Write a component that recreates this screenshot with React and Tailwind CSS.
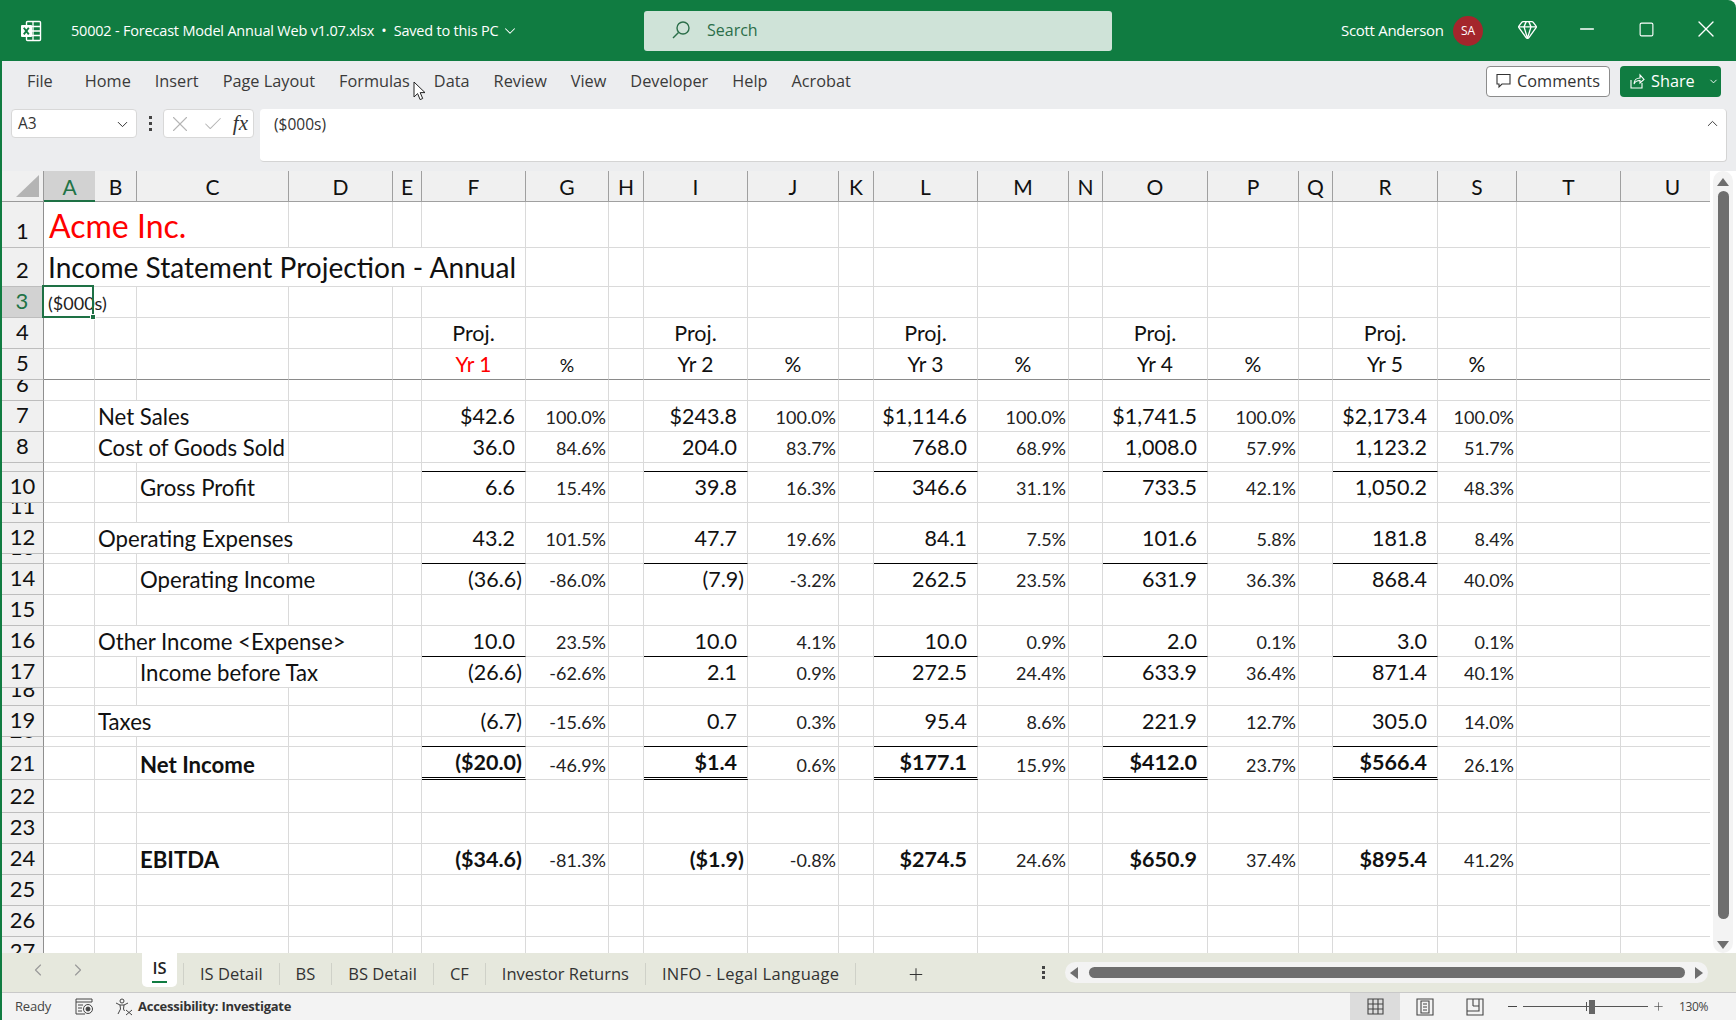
import React from "react";
import { ChevronDown, ChevronUp, ChevronLeft, ChevronRight, Gem, Minus, Plus, Square, X, Check } from "lucide-react";

const COLS = ["A","B","C","D","E","F","G","H","I","J","K","L","M","N","O","P","Q","R","S","T","U"];
const ROW_COUNT = 27;
const VAL_COLS = [5, 8, 11, 14, 17];

const VALUES = {
  7: [["$42.6","100.0%"],["$243.8","100.0%"],["$1,114.6","100.0%"],["$1,741.5","100.0%"],["$2,173.4","100.0%"]],
  8: [["36.0","84.6%"],["204.0","83.7%"],["768.0","68.9%"],["1,008.0","57.9%"],["1,123.2","51.7%"]],
  10: [["6.6","15.4%"],["39.8","16.3%"],["346.6","31.1%"],["733.5","42.1%"],["1,050.2","48.3%"]],
  12: [["43.2","101.5%"],["47.7","19.6%"],["84.1","7.5%"],["101.6","5.8%"],["181.8","8.4%"]],
  14: [["(36.6)","-86.0%"],["(7.9)","-3.2%"],["262.5","23.5%"],["631.9","36.3%"],["868.4","40.0%"]],
  16: [["10.0","23.5%"],["10.0","4.1%"],["10.0","0.9%"],["2.0","0.1%"],["3.0","0.1%"]],
  17: [["(26.6)","-62.6%"],["2.1","0.9%"],["272.5","24.4%"],["633.9","36.4%"],["871.4","40.1%"]],
  19: [["(6.7)","-15.6%"],["0.7","0.3%"],["95.4","8.6%"],["221.9","12.7%"],["305.0","14.0%"]],
  21: [["($20.0)","-46.9%"],["$1.4","0.6%"],["$177.1","15.9%"],["$412.0","23.7%"],["$566.4","26.1%"]],
  24: [["($34.6)","-81.3%"],["($1.9)","-0.8%"],["$274.5","24.6%"],["$650.9","37.4%"],["$895.4","41.2%"]],
};

const LABELS = {
  7: [1, 2, "Net Sales"],
  8: [1, 2, "Cost of Goods Sold"],
  10: [2, 1, "Gross Profit"],
  12: [1, 3, "Operating Expenses"],
  14: [2, 2, "Operating Income"],
  16: [1, 3, "Other Income <Expense>"],
  17: [2, 2, "Income before Tax"],
  19: [1, 2, "Taxes"],
  21: [2, 1, "Net Income"],
  24: [2, 1, "EBITDA"],
};

const BLACK_BOTTOM = [9, 13, 16, 20];
const BASE = "border-r border-b border-[#dadada] flex items-end whitespace-nowrap min-w-0";
const NUM = "justify-end text-[21.5px] leading-none pb-[4px] text-[#111]";
const PCT = "justify-end text-[18px] leading-none pb-[5px] pr-[2px] text-[#222]";

function bottomBorder(row, col) {
  if (VAL_COLS.includes(col)) {
    if (BLACK_BOTTOM.includes(row)) return "border-b-[#000]";
    if (row === 21) return "border-b-[3px] border-double border-b-[#000]";
  }
  if (row === 5) return "border-b-[#8a8a8a]";
  return "";
}

function Sheet() {
  const cells = [];
  cells.push(
    <div key="corner" className="bg-[#f0f0f0] border-b border-r border-[#9a9a9a] flex items-end justify-end pr-[4px] pb-[4px]">
      <div className="w-0 h-0 border-l-[23px] border-l-transparent border-b-[22px] border-b-[#b4b4b4]" />
    </div>
  );
  COLS.forEach((c, i) => {
    cells.push(
      <div
        key={c}
        className={
          i === 0
            ? "bg-[#d2d2d2] border-b-2 border-[#1e7145] text-[#217346] flex items-center justify-center text-[21px] pt-[2px]"
            : "bg-[#f0f0f0] border-b border-r border-[#a0a0a0] text-[#111] flex items-center justify-center text-[21px] pt-[2px]"
        }
      >
        {c}
      </div>
    );
  });

  for (let r = 1; r <= ROW_COUNT; r++) {
    cells.push(
      <div
        key={"h" + r}
        className={
          r === 3
            ? "bg-[#d2d2d2] border-r-2 border-b border-r-[#1e7145] border-b-[#bdbdbd] text-[#217346] overflow-hidden flex items-end justify-center text-[22px] leading-none pb-[5px]"
            : "bg-[#f0f0f0] border-r border-b border-r-[#8f8f8f] border-b-[#bdbdbd] text-[#111] overflow-hidden flex items-end justify-center text-[22px] leading-none pb-[5px]"
        }
      >
        {r}
      </div>
    );
    let c = 0;
    while (c < COLS.length) {
      const key = r + "-" + c;
      if (r === 1 && c === 0) {
        cells.push(<div key={key} className={`${BASE} col-span-3 text-[#ff0000] text-[32px] leading-none pb-[5px] pl-[5px]`}>Acme Inc.</div>);
        c += 3;
      } else if (r === 2 && c === 0) {
        cells.push(<div key={key} className={`${BASE} col-span-6 text-[#111] text-[28.1px] leading-none pb-[5px] pl-[4px]`}>Income Statement Projection - Annual</div>);
        c += 6;
      } else if (r === 3 && c === 0) {
        cells.push(
          <div key={key} className={`${BASE} col-span-2 relative text-[#222] text-[18px] leading-none pb-[5px] pl-[4px]`}>
            ($000s)
            <div className="absolute left-[-2px] top-[-2px] w-[52px] h-[33px] border-2 border-[#1e7145]">
              <div className="absolute right-[-4px] bottom-[-4px] w-[6px] h-[6px] bg-[#1e7145] border border-white" />
            </div>
          </div>
        );
        c += 2;
      } else if (LABELS[r] && LABELS[r][0] === c) {
        const [, span, text] = LABELS[r];
        const spanCls = span === 3 ? "col-span-3" : span === 2 ? "col-span-2" : "col-span-1";
        const bold = r === 21 || r === 24;
        cells.push(
          <div key={key} className={`${BASE} ${spanCls} text-[22.2px] leading-none pb-[3px] pl-[3px] text-[#111] ${bold ? "font-bold" : ""}`}>
            {text}
          </div>
        );
        c += span;
      } else if (r === 4 && VAL_COLS.includes(c)) {
        cells.push(<div key={key} className={`${BASE} justify-center text-[21.5px] leading-none pb-[4px] text-[#111]`}>Proj.</div>);
        c++;
      } else if (r === 5 && VAL_COLS.includes(c)) {
        const yr = VAL_COLS.indexOf(c) + 1;
        cells.push(
          <div key={key} className={`${BASE} justify-center text-[21px] leading-none pb-[5px] border-b-[#8a8a8a] ${yr === 1 ? "text-[#ff0000]" : "text-[#111]"}`}>
            {"Yr " + yr}
          </div>
        );
        c++;
      } else if (r === 5 && VAL_COLS.includes(c - 1)) {
        cells.push(
          <div key={key} className={`${BASE} justify-center leading-none pb-[5px] border-b-[#8a8a8a] text-[#111] ${c === 6 ? "text-[18px]" : "text-[21px]"}`}>
            %
          </div>
        );
        c++;
      } else if (VALUES[r] && VAL_COLS.includes(c)) {
        const v = VALUES[r][VAL_COLS.indexOf(c)][0];
        const paren = v.endsWith(")");
        const bold = r === 21 || r === 24;
        cells.push(
          <div key={key} className={`${BASE} ${NUM} ${paren ? "pr-[3px]" : "pr-[10px]"} ${bold ? "font-bold" : ""} ${bottomBorder(r, c)}`}>
            {v}
          </div>
        );
        c++;
      } else if (VALUES[r] && VAL_COLS.includes(c - 1)) {
        cells.push(<div key={key} className={`${BASE} ${PCT}`}>{VALUES[r][VAL_COLS.indexOf(c - 1)][1]}</div>);
        c++;
      } else {
        cells.push(<div key={key} className={`${BASE} ${bottomBorder(r, c)}`} />);
        c++;
      }
    }
  }

  return (
    <div className="flex-1 min-w-0 overflow-hidden font-['Lato',sans-serif]">
      <div className="grid grid-cols-[42px_51px_42px_152px_104px_29px_104px_83px_35px_104px_91px_35px_104px_91px_34px_105px_91px_34px_105px_79px_104px_104px] grid-rows-[31px_46px_39px_31px_31px_31px_21px_31px_31px_9px_31px_20px_31px_10px_31px_31px_31px_31px_18px_31px_10px_33px_33px_31px_31px_31px_31px_31px]">
        {cells}
      </div>
    </div>
  );
}

function ExcelLogo() {
  return (
    <svg width="22" height="24" viewBox="0 0 22 24" fill="none">
      <rect x="6.5" y="2.5" width="14" height="19" rx="1" stroke="white" strokeWidth="1.4" />
      <path d="M13 2.5v19M7 7.5h13M7 12h13M7 16.5h13" stroke="white" strokeWidth="1.3" />
      <rect x="1" y="6" width="11" height="12" rx="1" fill="white" />
      <path d="M3.8 8.8l5 6.6M8.8 8.8l-5 6.6" stroke="#107c41" strokeWidth="1.9" />
    </svg>
  );
}

function Cursor() {
  return (
    <svg width="14" height="20" viewBox="0 0 14 20" className="absolute left-[413px] top-[81px]">
      <path d="M1 1v15l3.6-3.4 2.5 6 2.6-1.1-2.5-5.9H12z" fill="white" stroke="#222" strokeWidth="1" />
    </svg>
  );
}

const MENU = ["Home","Insert","Page Layout","Formulas","Data","Review","View","Developer","Help","Acrobat"];
const TABS = ["IS Detail","BS","BS Detail","CF","Investor Returns","INFO - Legal Language"];

export default function App() {
  return (
    <div className="relative w-[1736px] h-[1020px] overflow-hidden flex flex-col bg-white font-['Open_Sans',sans-serif]">
      {/* title bar */}
      <div className="h-[61px] shrink-0 bg-[#107c41] rounded-tr-[8px] flex items-center text-white">
        <div className="w-[71px] pl-[20px] flex items-center"><ExcelLogo /></div>
        <div className="w-[573px] flex items-center gap-[3px] text-[14.5px] tracking-[-0.2px] whitespace-nowrap pt-px">
          50002 - Forecast Model Annual Web v1.07.xlsx&nbsp;&nbsp;•&nbsp;&nbsp;Saved to this PC
          <ChevronDown size={18} strokeWidth={1.4} />
        </div>
        <div className="w-[468px] h-[40px] bg-[#cfe3d8] rounded-[3px] flex items-center pl-[27px] gap-[16px] text-[#2b6e49] text-[16px] pb-[2px]">
          <svg width="20" height="20" viewBox="0 0 20 20" fill="none" stroke="#2b6e49" strokeWidth="1.4">
            <circle cx="12" cy="8" r="6" />
            <path d="M7.5 12.5L2 18" />
          </svg>
          Search
        </div>
        <div className="ml-[229px] w-[112px] text-[15px] tracking-[-0.3px] whitespace-nowrap">Scott Anderson</div>
        <div className="w-[30px] h-[30px] rounded-full bg-[#a4262c] flex items-center justify-center text-[12px]">SA</div>
        <Gem size={21} strokeWidth={1.5} className="ml-[34px] mb-[3px]" />
        <Minus size={22} strokeWidth={1.4} className="ml-[38px] mb-[3px]" />
        <Square size={17} strokeWidth={1.6} className="ml-[40px] mb-[3px]" />
        <X size={28} strokeWidth={1.2} className="ml-[37px] mb-[3px]" />
      </div>

      <div className="flex-1 flex flex-col min-h-0 border-l-2 border-[#107c41]">
        {/* ribbon tabs */}
        <div className="h-[48px] shrink-0 bg-[#ecedef] flex items-center pb-[8px] text-[#3a3a3a] text-[16.3px]">
          <div className="ml-[25px] mr-[32px]">File</div>
          <div className="flex items-center gap-[24px]">
            {MENU.map((m) => (
              <div key={m} className="whitespace-nowrap">{m}</div>
            ))}
          </div>
          <div className="ml-auto flex items-center gap-[10px] pr-[15px]">
            <div className="w-[124px] h-[31px] bg-white border border-[#8c8c8c] rounded-[4px] flex items-center justify-center gap-[6px] text-[#333]">
              <svg width="15" height="16" viewBox="0 0 15 16" fill="none" stroke="#333" strokeWidth="1.1">
                <path d="M1 1.5h13v9.5H6l-3 3v-3H1z" />
              </svg>
              Comments
            </div>
            <div className="w-[101px] h-[31px] bg-[#107c41] rounded-[4px] flex items-center pl-[10px] gap-[6px] text-white">
              <svg width="15" height="16" viewBox="0 0 15 16" fill="none" stroke="white" strokeWidth="1.1">
                <path d="M1 7v8h11V10M4 11c0-4 3-6 6-6V2l4 4.5L10 10V7.5c-3 0-5 1-6 3.5z" />
              </svg>
              Share
              <ChevronDown size={11} strokeWidth={2} className="ml-[7px]" />
            </div>
          </div>
        </div>

        {/* formula bar */}
        <div className="h-[62px] shrink-0 bg-[#ecedef] flex items-start pl-[9px] pr-[9px]">
          <div className="w-[126px] h-[29px] bg-white rounded-[4px] border border-[#d8d8d8] flex items-center justify-between pl-[6px] pr-[5px] pt-px text-[#333] text-[15.5px]">
            A3
            <ChevronDown size={17} strokeWidth={1.4} />
          </div>
          <div className="w-[26px] h-[29px] flex items-center justify-center">
            <div className="flex flex-col gap-[3px]">
              <div className="w-[3px] h-[3px] bg-[#444]" />
              <div className="w-[3px] h-[3px] bg-[#444]" />
              <div className="w-[3px] h-[3px] bg-[#444]" />
            </div>
          </div>
          <div className="w-[91px] h-[29px] bg-white rounded-[4px] border border-[#d8d8d8] flex items-center justify-between pl-[3px] pr-[5px] text-[#b5b5b5]">
            <X size={26} strokeWidth={1} />
            <Check size={22} strokeWidth={1.1} />
            <span className="font-['Liberation_Serif',serif] italic text-[#333] text-[21px] leading-none">fx</span>
          </div>
          <div className="ml-[6px] flex-1 h-[53px] bg-white rounded-[4px] border-b border-r border-[#d4d4d4] flex justify-between pl-[14px] pr-[5px] pt-[4px] text-[#333] text-[15.5px]">
            ($000s)
            <ChevronUp size={17} strokeWidth={1.3} className="mt-[2px]" />
          </div>
        </div>

        {/* sheet and vertical scrollbar */}
        <div className="h-[782px] shrink-0 flex bg-white">
          <Sheet />
          <div className="w-[26px] shrink-0 bg-white flex justify-center">
            <div className="w-[20px] h-full bg-[#f3f3f3] rounded-full flex flex-col items-center pt-[7px] pb-[4px]">
              <div className="w-0 h-0 border-l-[6px] border-r-[6px] border-b-[8px] border-l-transparent border-r-transparent border-b-[#6e6e6e]" />
              <div className="w-[11px] h-[728px] mt-[5px] bg-[#6e6e6e] rounded-full" />
              <div className="w-0 h-0 mt-auto border-l-[6px] border-r-[6px] border-t-[8px] border-l-transparent border-r-transparent border-t-[#6e6e6e]" />
            </div>
          </div>
        </div>

        {/* sheet tabs */}
        <div className="h-[40px] shrink-0 bg-[#e6e8dd] border-b border-[#c9c9c9] flex items-start text-[#333] text-[16.5px]">
          <div className="w-[140px] h-[34px] flex items-center pl-[26px] gap-[20px] text-[#9a9a9a]">
            <ChevronLeft size={20} strokeWidth={1.4} />
            <ChevronRight size={20} strokeWidth={1.4} />
          </div>
          <div className="w-[35px] h-[34px] bg-white rounded-b-[5px] flex flex-col items-center pt-[5px] font-semibold text-[#222]">
            <span className="leading-[20px]">IS</span>
            <div className="w-[15px] h-[2px] bg-[#107c41] mt-[3px]" />
          </div>
          <div className="flex items-center ml-[6px] h-[32px] mt-[5px]">
            {TABS.map((t) => (
              <div key={t} className={`border-l border-[#cfd1c8] h-[22px] px-[16px] flex items-center whitespace-nowrap ${t.startsWith("INFO") ? "tracking-[0.3px]" : ""}`}>{t}</div>
            ))}
            <div className="border-l border-[#cfd1c8] h-[22px]" />
          </div>
          <div className="w-[20px] mt-[5px] h-[32px] ml-[50px] flex items-center justify-center text-[#333]">
            <Plus size={21} strokeWidth={1.2} />
          </div>
          <div className="ml-[116px] mt-[13px] flex flex-col gap-[2px]">
            <div className="w-[3px] h-[3px] bg-[#444]" />
            <div className="w-[3px] h-[3px] bg-[#444]" />
            <div className="w-[3px] h-[3px] bg-[#444]" />
          </div>
          <div className="ml-[20px] mt-[9px] w-[643px] h-[21px] bg-[#f3f3f3] rounded-full flex items-center justify-between px-[5px]">
            <div className="w-0 h-0 border-t-[6px] border-b-[6px] border-r-[8px] border-t-transparent border-b-transparent border-r-[#6e6e6e]" />
            <div className="w-[596px] h-[11px] bg-[#6e6e6e] rounded-full" />
            <div className="w-0 h-0 border-t-[6px] border-b-[6px] border-l-[8px] border-t-transparent border-b-transparent border-l-[#6e6e6e]" />
          </div>
        </div>

        {/* status bar */}
        <div className="flex-1 bg-[#f3f3f3] flex items-center text-[#444] text-[13px]">
          <span className="ml-[13px] tracking-[-0.2px]">Ready</span>
          <svg width="19" height="17" viewBox="0 0 19 17" fill="none" stroke="#444" strokeWidth="1" className="ml-[24px]">
            <path d="M1 1h16v3H1zM1 4v12h9" />
            <path d="M3 7h5M3 10h4M3 13h4" />
            <circle cx="13" cy="11" r="4.5" />
            <circle cx="13" cy="11" r="2" fill="#444" />
          </svg>
          <svg width="18" height="18" viewBox="0 0 18 18" fill="none" stroke="#444" strokeWidth="1" className="ml-[21px]">
            <circle cx="7" cy="3" r="2" />
            <path d="M1 5l4 2h4l4-2M5 7l.5 4L3 16M9 7l-.5 4 1 2M11 12l6 5M17 12l-6 5" />
          </svg>
          <span className="ml-[5px] font-bold text-[#333] tracking-[-0.25px]">Accessibility: Investigate</span>
          <div className="ml-auto mr-[25px] flex items-center">
            <div className="w-[50px] h-[27px] bg-[#dcdcdc] flex items-center justify-center">
              <svg width="17" height="17" viewBox="0 0 17 17" fill="none" stroke="#444" strokeWidth="1.1">
                <path d="M1 1h15v15H1zM1 6h15M1 11h15M6 1v15M11 1v15" />
              </svg>
            </div>
            <div className="w-[50px] flex items-center justify-center">
              <svg width="18" height="18" viewBox="0 0 18 18" fill="none" stroke="#444" strokeWidth="1.1">
                <path d="M1 1h16v16H1zM5 3h8v12H5zM7 6h4M7 9h4M7 12h4" />
              </svg>
            </div>
            <div className="w-[50px] flex items-center justify-center">
              <svg width="18" height="18" viewBox="0 0 18 18" fill="none" stroke="#444" strokeWidth="1.1">
                <path d="M1 1h16v16H1zM1 13h12V1M7 1v7M13 8H7" />
              </svg>
            </div>
            <div className="ml-[8px] w-[9px] h-[1.5px] bg-[#444]" />
            <div className="relative ml-[6px] w-[125px] h-[16px] flex items-center">
              <div className="w-full h-px bg-[#555]" />
              <div className="absolute left-[63px] top-[3px] h-[9px] w-px bg-[#555]" />
              <div className="absolute left-[66px] top-[1px] h-[14px] w-[6px] bg-[#666]" />
            </div>
            <Plus size={13} strokeWidth={1.2} className="ml-[4px]" />
            <span className="ml-[14px] w-[32px] tracking-[-0.4px] text-[12px]">130%</span>
          </div>
        </div>
      </div>
      <Cursor />
    </div>
  );
}
